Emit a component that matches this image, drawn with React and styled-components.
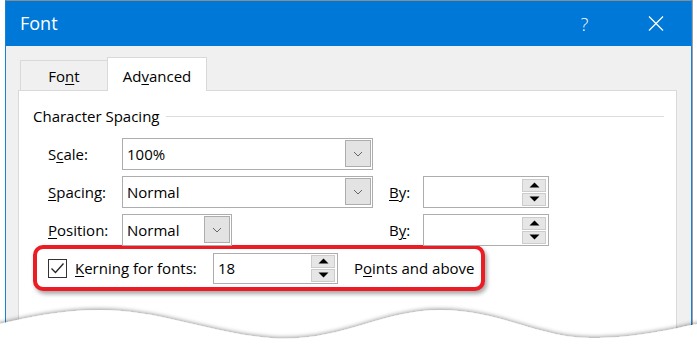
import React from 'react';
import styled, { createGlobalStyle } from 'styled-components';

const GlobalStyle = createGlobalStyle`
  html, body {
    margin: 0;
    padding: 0;
    background: #fff;
  }
  body {
    font-family: 'Open Sans', 'Noto Sans', sans-serif;
    color: #000;
  }
`;

const Stage = styled.div`
  position: relative;
  width: 697px;
  height: 353px;
  overflow: hidden;
  padding-left: 5px;
  box-sizing: border-box;
`;

const Window = styled.div`
  width: 687px;
  height: 380px;
  box-sizing: border-box;
  border: 1px solid #1a82d6;
  border-top-color: #8c8c8c;
  box-shadow: 1px 0 0 #a0a0a0;
  background: #f0f0f0;
`;

const TitleBar = styled.div`
  height: 45px;
  background: #0078d7;
  color: #fff;
  display: flex;
  align-items: center;
  padding-left: 14px;
  font-size: 18px;
`;

const TitleText = styled.div`
  flex: 1;
  margin-top: -2px;
`;

const TitleButton = styled.div`
  width: 71px;
  height: 45px;
  display: flex;
  align-items: center;
  justify-content: center;
  font-size: 18px;
  font-weight: 300;
`;

const Body = styled.div`
  padding: 11px 14px 0 12px;
`;

const TabRow = styled.div`
  display: flex;
  align-items: flex-end;
  margin-left: 2px;
  height: 34px;
  position: relative;
  z-index: 1;
`;

const Tab = styled.div`
  box-sizing: border-box;
  width: ${p => p.width}px;
  height: ${p => (p.active ? 34 : 31)}px;
  display: flex;
  align-items: center;
  justify-content: center;
  font-size: 15px;
  background: ${p => (p.active ? '#fff' : '#f0f0f0')};
  border: 1px solid #d9d9d9;
  border-bottom: ${p => (p.active ? 'none' : '1px solid #d9d9d9')};
  border-right: ${p => (p.active ? '1px solid #d9d9d9' : 'none')};
  padding-top: ${p => (p.active ? 2 : 1)}px;
`;

const Key = styled.span`
  text-decoration: underline;
  text-underline-offset: 2px;
  text-decoration-thickness: 1px;
`;

const Panel = styled.div`
  margin-top: -1px;
  height: 300px;
  box-sizing: border-box;
  background: #fff;
  border: 1px solid #d9d9d9;
  padding: 15px 12px 0 14px;
  font-size: 15px;
`;

const GroupHeader = styled.div`
  display: flex;
  align-items: center;
  gap: 7px;
  height: 20px;
  line-height: 20px;
  &::after {
    content: '';
    flex: 1;
    height: 1px;
    background: #dcdcdc;
    margin-top: 1px;
  }
`;

const FieldGrid = styled.div`
  display: grid;
  grid-template-columns: 74px 251px 50px 126px;
  grid-auto-rows: 32px;
  row-gap: 6px;
  align-items: center;
  margin: 12px 0 0 15px;
`;

const Label = styled.div`
  padding-left: ${p => p.indent || 0}px;
  white-space: nowrap;
`;

const Combo = styled.div`
  box-sizing: border-box;
  width: ${p => p.width}px;
  height: 32px;
  display: flex;
  align-items: stretch;
  padding: 1px;
  border: 1px solid #adadad;
  background: #fff;
`;

const FieldValue = styled.div`
  flex: 1;
  display: flex;
  align-items: center;
  padding-left: 3px;
`;

const DropButton = styled.div`
  box-sizing: border-box;
  width: 26px;
  margin-bottom: 1px;
  border: 1px solid #adadad;
  background: #e3e3e3;
  display: flex;
  align-items: center;
  justify-content: center;
`;

const Spinner = styled.div`
  box-sizing: border-box;
  width: ${p => p.width}px;
  height: ${p => p.height || 32}px;
  display: flex;
  align-items: center;
  padding: 1px 2px 1px 1px;
  border: 1px solid #adadad;
  background: #fff;
`;

const SpinColumn = styled.div`
  display: flex;
  flex-direction: column;
  gap: 1px;
`;

const SpinButton = styled.div`
  box-sizing: border-box;
  width: 24px;
  height: ${p => p.h}px;
  background: #e6e6e6;
  border: 1px solid #cccccc;
  display: flex;
  align-items: center;
  justify-content: center;
`;

const Highlight = styled.div`
  box-sizing: border-box;
  width: 452px;
  height: 46px;
  margin: -1px 0 0 0;
  border: 4px solid #ec1c24;
  border-radius: 10px;
  box-shadow: 2px 3px 4px rgba(0, 0, 0, 0.35);
  display: flex;
  align-items: center;
  padding-left: 11px;
  background: #fff;
`;

const CheckBox = styled.div`
  box-sizing: border-box;
  width: 19px;
  height: 19px;
  border: 1px solid #333;
  background: #fff;
  display: flex;
  align-items: center;
  justify-content: center;
  margin-right: 8px;
`;

const KerningLabel = styled.div`
  width: 138px;
  white-space: nowrap;
`;

const TrailingLabel = styled.div`
  margin-left: 16px;
  white-space: nowrap;
`;

const TornEdge = styled.svg`
  position: absolute;
  left: 0;
  bottom: 0;
  display: block;
`;

const Chevron = () => (
  <svg width="10" height="6" viewBox="0 0 10 6">
    <path d="M1 1 L5 5 L9 1" fill="none" stroke="#666" strokeWidth="1" />
  </svg>
);

const Arrow = ({ up }) => (
  <svg width="11" height="6" viewBox="0 0 11 6">
    <path d={up ? 'M0.5 5.5 L5.5 0.5 L10.5 5.5 Z' : 'M0.5 0.5 L5.5 5.5 L10.5 0.5 Z'} fill="#000" />
  </svg>
);

const SpinBox = ({ width, height, value, btn }) => (
  <Spinner width={width} height={height}>
    <FieldValue>{value}</FieldValue>
    <SpinColumn>
      <SpinButton h={btn}><Arrow up /></SpinButton>
      <SpinButton h={btn}><Arrow /></SpinButton>
    </SpinColumn>
  </Spinner>
);

const ComboBox = ({ width, value }) => (
  <Combo width={width}>
    <FieldValue>{value}</FieldValue>
    <DropButton><Chevron /></DropButton>
  </Combo>
);

export default function App() {
  return (
    <>
      <GlobalStyle />
      <Stage>
        <Window>
          <TitleBar>
            <TitleText>Font</TitleText>
            <TitleButton>?</TitleButton>
            <TitleButton>
              <svg width="16" height="15" viewBox="0 0 16 15">
                <path d="M1 0.5 L15 14.5 M15 0.5 L1 14.5" stroke="#fff" strokeWidth="1.2" />
              </svg>
            </TitleButton>
          </TitleBar>
          <Body>
            <TabRow>
              <Tab width={87}>Fo<Key>n</Key>t</Tab>
              <Tab width={100} active>Ad<Key>v</Key>anced</Tab>
            </TabRow>
            <Panel>
              <GroupHeader>Character Spacing</GroupHeader>
              <FieldGrid>
                <Label>S<Key>c</Key>ale:</Label>
                <ComboBox width={251} value="100%" />
                <div />
                <div />

                <Label><Key>S</Key>pacing:</Label>
                <ComboBox width={251} value="Normal" />
                <Label indent={16}><Key>B</Key>y:</Label>
                <SpinBox width={126} height={32} btn={13} value="" />

                <Label><Key>P</Key>osition:</Label>
                <ComboBox width={110} value="Normal" />
                <Label indent={16}>B<Key>y</Key>:</Label>
                <SpinBox width={126} height={32} btn={13} value="" />
              </FieldGrid>
              <Highlight>
                <CheckBox>
                  <svg width="17" height="17" viewBox="0 0 17 17">
                    <path d="M2.5 8.5 L6.5 12.5 L14.5 3.5" fill="none" stroke="#222" strokeWidth="1.3" />
                  </svg>
                </CheckBox>
                <KerningLabel><Key>K</Key>erning for fonts:</KerningLabel>
                <SpinBox width={125} height={31} btn={13} value="18" />
                <TrailingLabel>P<Key>o</Key>ints and above</TrailingLabel>
              </Highlight>
            </Panel>
          </Body>
        </Window>
        <TornEdge width="697" height="60" viewBox="0 0 697 60">
          <defs>
            <filter id="tear" x="-5%" y="-30%" width="110%" height="160%">
              <feDropShadow dx="0" dy="-1" stdDeviation="2" floodColor="#000" floodOpacity="0.4" />
            </filter>
          </defs>
          <path
            d="M-5 32 C30 24 60 17 100 17 C160 17 210 40 270 45 C340 50 380 17 440 17 C500 17 540 45 590 45 C640 45 670 36 702 30 L702 70 L-5 70 Z"
            fill="#fff"
            filter="url(#tear)"
          />
        </TornEdge>
      </Stage>
    </>
  );
}
